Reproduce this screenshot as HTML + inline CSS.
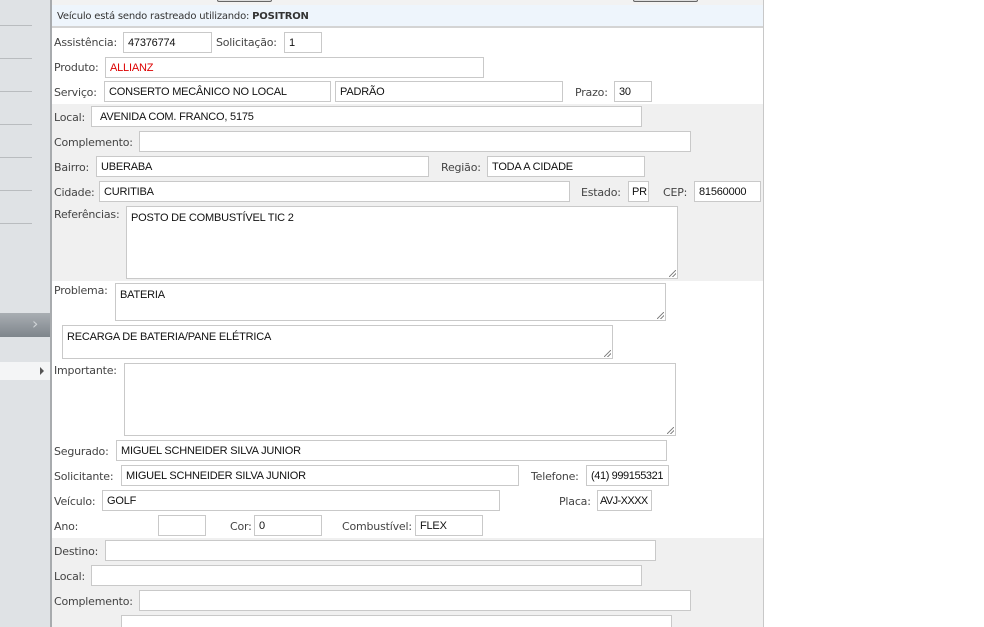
<!DOCTYPE html>
<html><head><meta charset="utf-8">
<style>
*{box-sizing:border-box;margin:0;padding:0}
html{width:984px;height:627px;overflow:hidden}
body{width:984px;height:627px;overflow:hidden;background:#fff;position:relative;font-family:"DejaVu Sans","Liberation Sans",sans-serif;font-size:11px;color:#333}
.a{position:absolute}
.lb{position:absolute;font-size:11px;color:#444;white-space:nowrap;letter-spacing:-0.2px}
.in{position:absolute;background:#fff;border:1px solid #c9c9c9;height:21px;font-family:"Liberation Sans",sans-serif;font-size:11px;color:#111;padding:4px 0 0 4px;white-space:nowrap;overflow:hidden;letter-spacing:-0.2px}
.ta{position:absolute;background:#fff;border:1px solid #c9c9c9;font-family:"Liberation Sans",sans-serif;font-size:11px;color:#111;padding:5px 0 0 4px;white-space:nowrap;letter-spacing:-0.2px}
.ta::after{content:"";position:absolute;right:1px;bottom:1px;width:7px;height:7px;background:linear-gradient(135deg,transparent 45%,#888 45%,#888 55%,transparent 55%,transparent 70%,#888 70%,#888 80%,transparent 80%)}
.ln{position:absolute;left:0;width:32px;height:1px;background:#b9bcbf}
</style></head><body>
<div class="a" style="left:0;top:0;width:50px;height:627px;background:#dfe2e5"></div>
<div class="ln" style="top:25px"></div><div class="ln" style="top:58px"></div><div class="ln" style="top:91px"></div><div class="ln" style="top:124px"></div><div class="ln" style="top:157px"></div><div class="ln" style="top:190px"></div><div class="ln" style="top:223px"></div>
<div class="a" style="left:0;top:313px;width:50px;height:24px;background:linear-gradient(#a9aeb3,#7e858b)"></div>
<div class="a" style="left:32px;top:314px;color:#cfd3d6;font-size:16px">&#8250;</div>
<div class="a" style="left:0;top:362px;width:50px;height:18px;background:#f4f5f6"></div>
<div class="a" style="left:40px;top:367px;width:0;height:0;border-left:4px solid #555;border-top:4px solid transparent;border-bottom:4px solid transparent"></div>
<div class="a" style="left:50px;top:0;width:2px;height:627px;background:#a8abae"></div>
<div class="a" style="left:763px;top:0;width:1px;height:627px;background:#c8c8c8"></div>
<div class="a" style="left:52px;top:0;width:711px;height:5px;background:#f2f2f2"></div>
<div class="a" style="left:217px;top:-4px;width:55px;height:6px;border:1px solid #666;background:#ddd;border-radius:2px"></div>
<div class="a" style="left:633px;top:-4px;width:65px;height:6px;border:1px solid #666;background:#ddd;border-radius:2px"></div>
<div class="a" style="left:52px;top:5px;width:711px;height:23px;background:#eef5fc;border-bottom:2px solid #d4d4d4"></div>
<div class="lb" style="left:57px;top:11px;font-size:10px;color:#333">Veículo está sendo rastreado utilizando: <b>POSITRON</b></div>
<div class="a" style="left:52px;top:104px;width:711px;height:177px;background:#f0f0f0"></div>
<div class="a" style="left:52px;top:538px;width:711px;height:89px;background:#f0f0f0"></div>

<div class="lb" style="left:54px;top:36px">Assistência:</div><div class="in" style="left:123px;top:32px;width:89px">47376774</div>
<div class="lb" style="left:216px;top:36px">Solicitação:</div><div class="in" style="left:284px;top:32px;width:38px">1</div>
<div class="lb" style="left:54px;top:61px">Produto:</div><div class="in" style="left:105px;top:57px;width:379px;color:#d00">ALLIANZ</div>
<div class="lb" style="left:54px;top:86px">Serviço:</div><div class="in" style="left:104px;top:81px;width:227px">CONSERTO MECÂNICO NO LOCAL</div>
<div class="in" style="left:335px;top:81px;width:228px">PADRÃO</div>
<div class="lb" style="left:575px;top:86px">Prazo:</div><div class="in" style="left:614px;top:81px;width:38px">30</div>

<div class="lb" style="left:54px;top:111px">Local:</div><div class="in" style="left:91px;top:106px;width:551px;padding-left:8px">AVENIDA COM. FRANCO, 5175</div>
<div class="lb" style="left:54px;top:136px">Complemento:</div><div class="in" style="left:139px;top:131px;width:552px"></div>
<div class="lb" style="left:54px;top:161px">Bairro:</div><div class="in" style="left:96px;top:156px;width:333px">UBERABA</div>
<div class="lb" style="left:441px;top:161px">Região:</div><div class="in" style="left:487px;top:156px;width:158px">TODA A CIDADE</div>
<div class="lb" style="left:54px;top:186px">Cidade:</div><div class="in" style="left:99px;top:181px;width:471px">CURITIBA</div>
<div class="lb" style="left:581px;top:186px">Estado:</div><div class="in" style="left:628px;top:181px;width:21px;padding-left:3px">PR</div>
<div class="lb" style="left:663px;top:186px">CEP:</div><div class="in" style="left:694px;top:181px;width:67px">81560000</div>
<div class="lb" style="left:54px;top:208px">Referências:</div><div class="ta" style="left:126px;top:206px;width:552px;height:73px">POSTO DE COMBUSTÍVEL TIC 2</div>

<div class="lb" style="left:54px;top:284px">Problema:</div><div class="ta" style="left:115px;top:283px;width:551px;height:38px">BATERIA</div>
<div class="ta" style="left:62px;top:325px;width:551px;height:34px">RECARGA DE BATERIA/PANE ELÉTRICA</div>
<div class="lb" style="left:54px;top:364px">Importante:</div><div class="ta" style="left:124px;top:363px;width:552px;height:73px"></div>

<div class="lb" style="left:54px;top:445px">Segurado:</div><div class="in" style="left:116px;top:440px;width:551px">MIGUEL SCHNEIDER SILVA JUNIOR</div>
<div class="lb" style="left:54px;top:470px">Solicitante:</div><div class="in" style="left:121px;top:465px;width:398px">MIGUEL SCHNEIDER SILVA JUNIOR</div>
<div class="lb" style="left:531px;top:470px">Telefone:</div><div class="in" style="left:586px;top:465px;width:83px;letter-spacing:-0.4px">(41) 999155321</div>
<div class="lb" style="left:54px;top:495px">Veículo:</div><div class="in" style="left:102px;top:490px;width:398px">GOLF</div>
<div class="lb" style="left:559px;top:495px">Placa:</div><div class="in" style="left:597px;top:490px;width:55px;padding-left:2px;letter-spacing:-0.6px">AVJ-XXXX</div>
<div class="lb" style="left:54px;top:520px">Ano:</div><div class="in" style="left:158px;top:515px;width:48px"></div>
<div class="lb" style="left:230px;top:520px">Cor:</div><div class="in" style="left:254px;top:515px;width:68px">0</div>
<div class="lb" style="left:342px;top:520px">Combustível:</div><div class="in" style="left:415px;top:515px;width:68px">FLEX</div>

<div class="lb" style="left:54px;top:545px">Destino:</div><div class="in" style="left:105px;top:540px;width:551px"></div>
<div class="lb" style="left:54px;top:570px">Local:</div><div class="in" style="left:91px;top:565px;width:551px"></div>
<div class="lb" style="left:54px;top:595px">Complemento:</div><div class="in" style="left:139px;top:590px;width:552px"></div>
<div class="in" style="left:121px;top:615px;width:551px;height:12px;border-bottom:none"></div>
</body></html>
